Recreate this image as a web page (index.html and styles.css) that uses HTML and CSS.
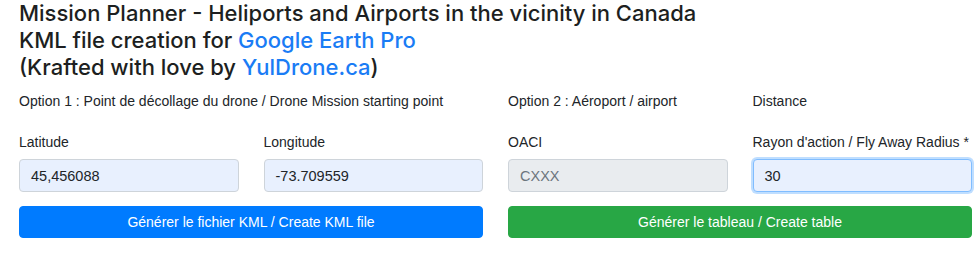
FILE: index.html
```html
<!DOCTYPE html>
<html lang="fr">
<head>
<meta charset="utf-8">
<title>Mission Planner</title>
<link rel="stylesheet" href="styles.css">
</head>
<body>
<div class="page">
  <h3 class="title">Mission Planner - Heliports and Airports in the vicinity in Canada<br>KML file creation for <a href="#">Google Earth Pro</a><br>(Krafted with love by <a href="#">YulDrone.ca</a>)</h3>
  <div class="grid">
    <div class="section span2">Option 1 : Point de décollage du drone / Drone Mission starting point</div>
    <div class="section">Option 2 : Aéroport / airport</div>
    <div class="section">Distance</div>

    <div class="field">
      <label class="label">Latitude</label>
      <div class="input autofill">45,456088</div>
    </div>
    <div class="field">
      <label class="label">Longitude</label>
      <div class="input autofill">-73.709559</div>
    </div>
    <div class="field">
      <label class="label">OACI</label>
      <div class="input disabled">CXXX</div>
    </div>
    <div class="field">
      <label class="label">Rayon d'action / Fly Away Radius *</label>
      <div class="input autofill focus">30</div>
    </div>

    <button class="btn btn-primary span2">Générer le fichier KML / Create KML file</button>
    <button class="btn btn-success span2">Générer le tableau / Create table</button>
  </div>
</div>
</body>
</html>
```

FILE: styles.css
```css
html, body {
  margin: 0;
  padding: 0;
  background: #ffffff;
}
body {
  font-family: "Liberation Sans", Arial, sans-serif;
  color: #212529;
}
.page {
  padding: 0 8px 0 19px;
}
.title {
  margin: 0 0 10px 0;
  font-family: Inter, "Liberation Sans", sans-serif;
  font-size: 22px;
  line-height: 27px;
  font-weight: 500;
  color: #1d1f21;
}
.title a {
  color: #1a7cf5;
  text-decoration: none;
}
.grid {
  display: grid;
  grid-template-columns: repeat(4, 1fr);
  column-gap: 25px;
}
.span2 {
  grid-column: span 2;
}
.section {
  font-size: 14px;
  line-height: 21px;
  margin-bottom: 20px;
}
.field {
  display: flex;
  flex-direction: column;
}
.label {
  font-size: 14px;
  line-height: 21px;
  margin-bottom: 6px;
}
.input {
  box-sizing: border-box;
  height: 33px;
  padding: 0 11px;
  display: flex;
  align-items: center;
  font-size: 14.5px;
  border: 1px solid #ced4da;
  border-radius: 4px;
  color: #212529;
}
.autofill {
  background: #e8f0fe;
}
.disabled {
  background: #e9ecef;
  color: #6c757d;
}
.focus {
  border-color: #80bdff;
  box-shadow: 0 0 0 2px rgba(0, 123, 255, 0.25);
}
.btn {
  margin-top: 14px;
  height: 32px;
  border: 1px solid transparent;
  border-radius: 4px;
  font-family: "Liberation Sans", Arial, sans-serif;
  font-size: 14px;
  color: #ffffff;
  padding: 0;
}
.btn-primary {
  background: #007bff;
  border-color: #007bff;
}
.btn-success {
  background: #28a745;
  border-color: #28a745;
}
```
